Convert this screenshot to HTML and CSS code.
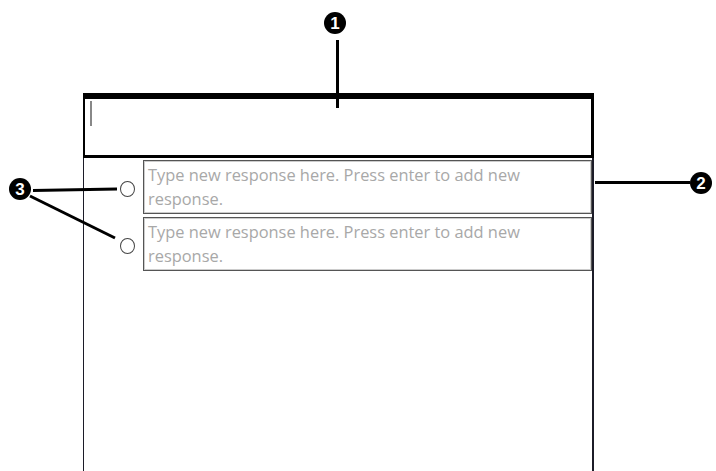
FILE: index.html
```html
<!DOCTYPE html>
<html lang="en">
<head>
  <meta charset="UTF-8">
  <title>Question</title>
  <link rel="stylesheet" href="styles.css">
</head>
<body>
  <div class="sheet">
    <!-- Vraagveld -->
    <div class="question">
      <span class="cursor"></span>
    </div>

    <!-- Antwoorden -->
    <div class="responses">
      <div class="row">
        <span class="radio"></span>
        <div class="answer">Type new response here. Press enter to add new response.</div>
      </div>
      <div class="row">
        <span class="radio"></span>
        <div class="answer">Type new response here. Press enter to add new response.</div>
      </div>
    </div>
  </div>

  <!-- Callouts -->
  <svg class="callouts" width="716" height="471" viewBox="0 0 716 471">
    <g stroke="#000" stroke-width="3" fill="none">
      <line x1="337.5" y1="40" x2="337.5" y2="108" />
      <line x1="595" y1="182.5" x2="690" y2="182.5" />
      <line x1="33" y1="190.5" x2="117" y2="189" />
      <line x1="30" y1="196" x2="115" y2="238" />
    </g>
    <g fill="#000">
      <circle cx="335" cy="23" r="11" />
      <circle cx="701" cy="183" r="11" />
      <circle cx="20" cy="189" r="11" />
    </g>
    <g class="num" fill="#fff" text-anchor="middle">
      <text x="335" y="29">1</text>
      <text x="701" y="189">2</text>
      <text x="20" y="195">3</text>
    </g>
  </svg>
</body>
</html>
```

FILE: styles.css
```css
body {
  margin: 0;
  padding: 0;
  background-color: white;
  font-family: "Open Sans", sans-serif;
  overflow: hidden;
}

.sheet {
  width: 511px;
  margin: 93px 0 0 83px;
}

.question {
  box-sizing: border-box;
  height: 65px;
  border-top: 6px solid #000;
  border-left: 2px solid #000;
  border-right: 3px solid #000;
  border-bottom: 3px solid #000;
  padding: 2px 0 0 5px;
}

.cursor {
  display: block;
  width: 2px;
  height: 25px;
  background-color: #888;
}

.responses {
  box-sizing: border-box;
  height: 320px;
  border-left: 1px solid #1c1c28;
  border-right: 2px solid #1c1c28;
  padding-top: 2px;
  display: flex;
  flex-direction: column;
  gap: 3px;
}

.row {
  display: grid;
  grid-template-columns: 59px 1fr;
  align-items: center;
}

.radio {
  justify-self: end;
  margin-right: 8px;
  margin-top: 4px;
  width: 13px;
  height: 14px;
  border: 1.5px solid #444;
  border-radius: 50%;
}

.answer {
  border: 1px solid #555;
  box-shadow: inset 0 0 0 1px #ccc;
  padding: 2px 4px;
  font-size: 16.4px;
  line-height: 24px;
  color: #a8a8a8;
}

.callouts {
  position: absolute;
  top: 0;
  left: 0;
  pointer-events: none;
}

.num text {
  font-family: "Liberation Sans", sans-serif;
  font-weight: bold;
  font-size: 17px;
}
```
